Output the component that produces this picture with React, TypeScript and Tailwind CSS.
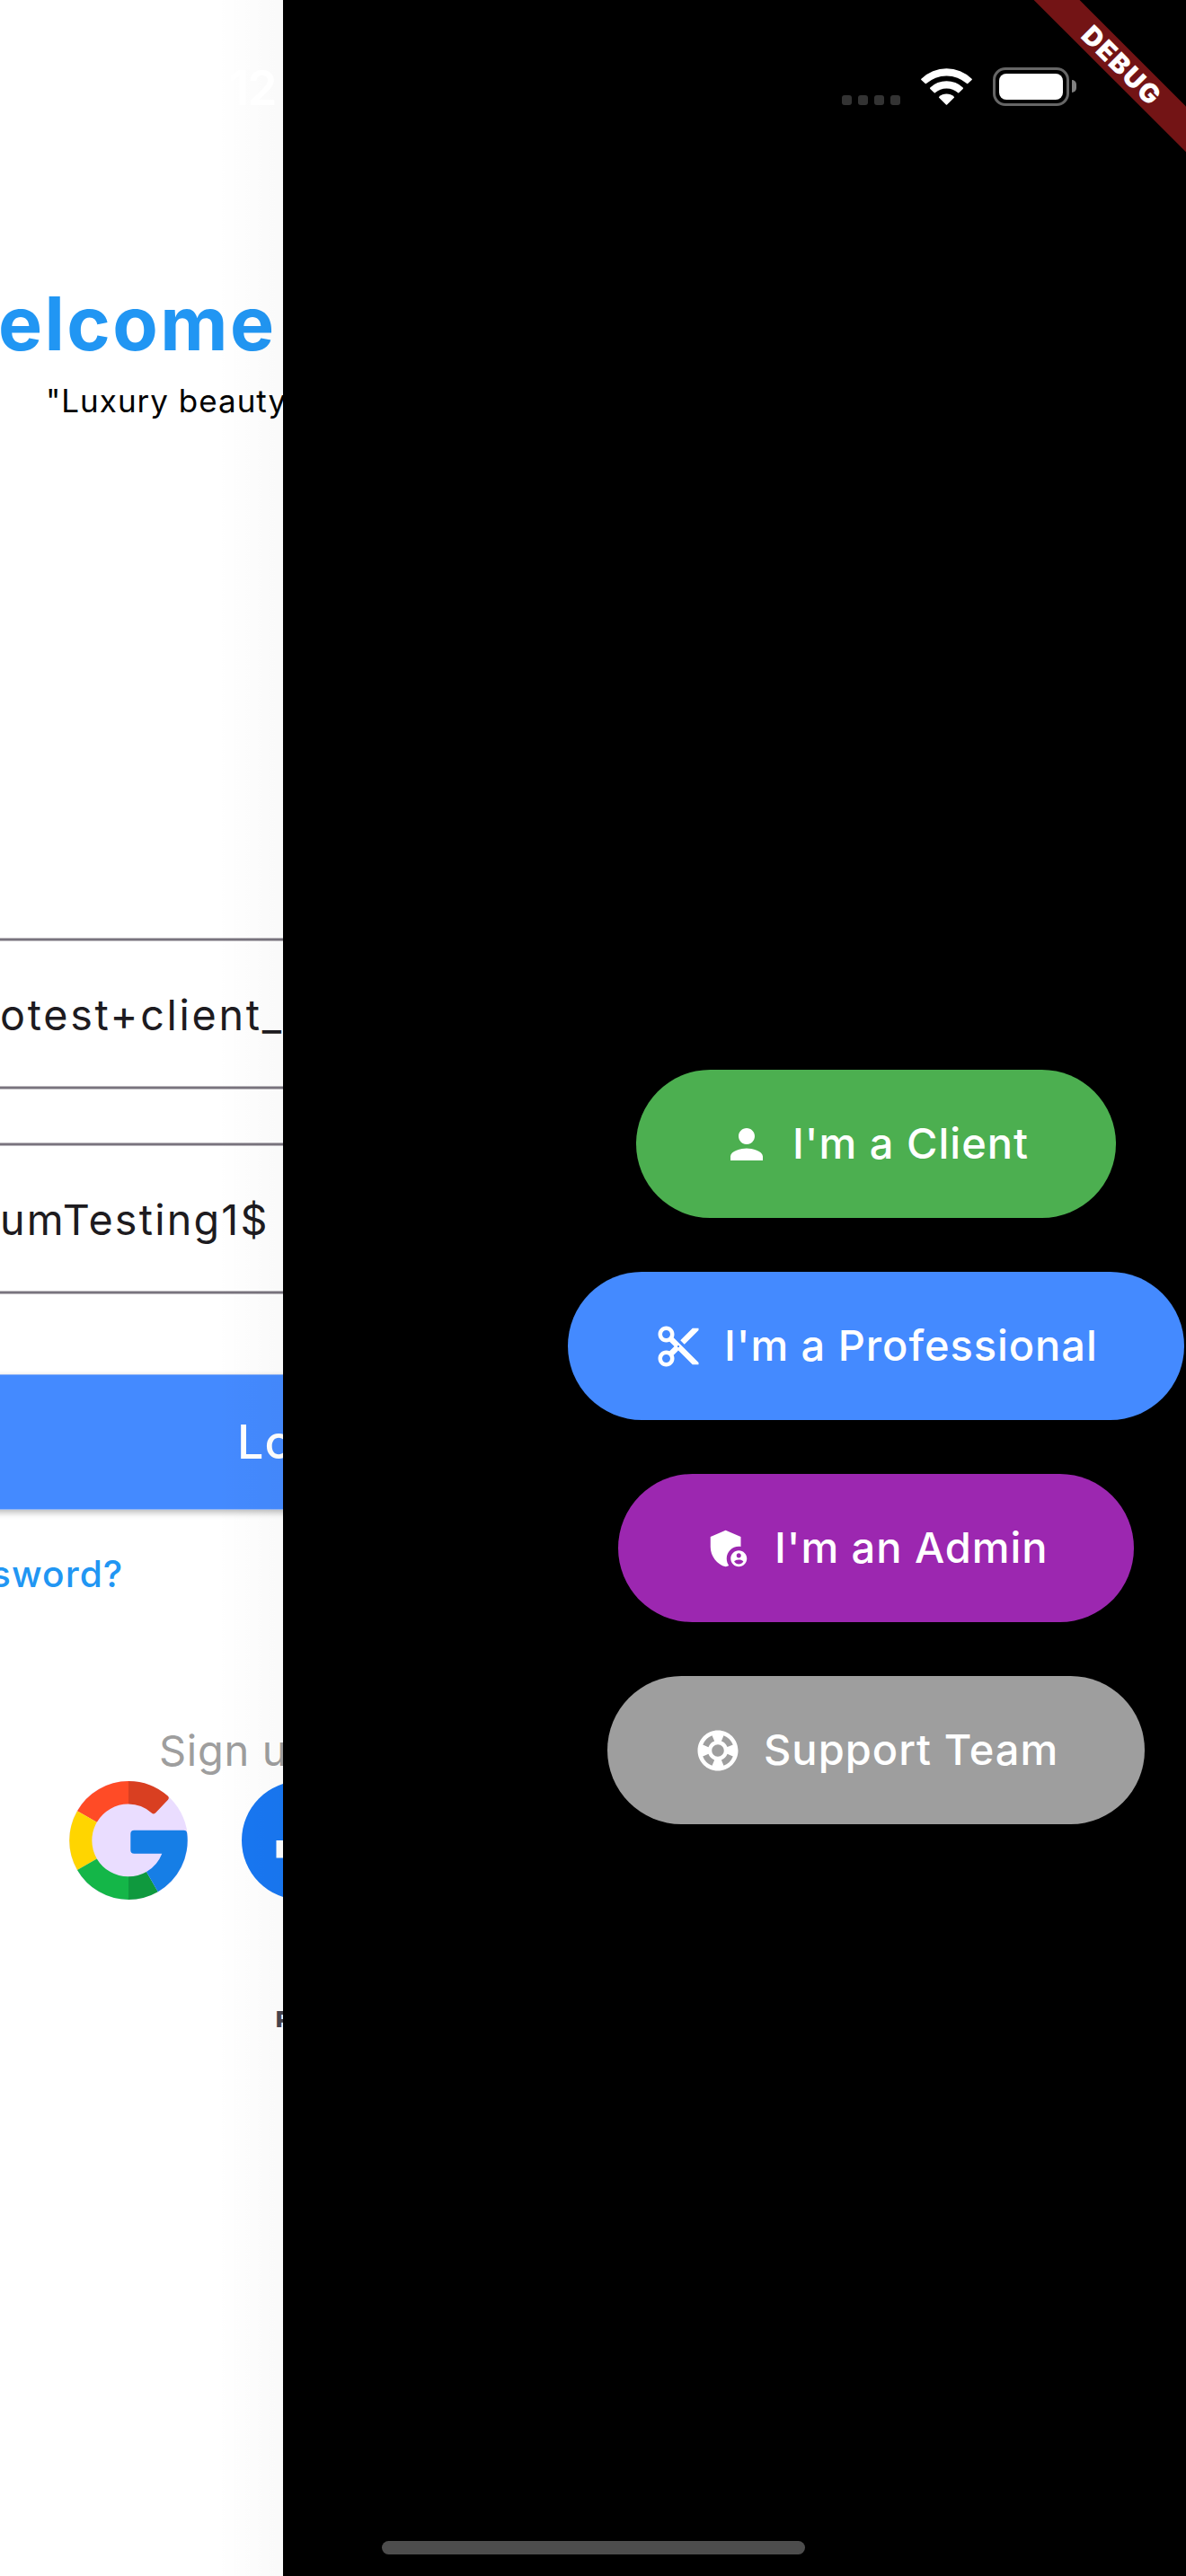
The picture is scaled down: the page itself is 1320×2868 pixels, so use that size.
import type { IconType } from "react-icons";
import {
  MdAdminPanelSettings,
  MdContentCut,
  MdPerson,
  MdSupport,
} from "react-icons/md";

type Role = { label: string; icon: IconType; className: string };

const roles: Role[] = [
  { label: "I'm a Client", icon: MdPerson, className: "w-[534px] bg-[#4caf50] tracking-[1px]" },
  { label: "I'm a Professional", icon: MdContentCut, className: "w-[686px] bg-[#448aff] tracking-[0.95px]" },
  { label: "I'm an Admin", icon: MdAdminPanelSettings, className: "w-[574px] bg-[#9c27b0] tracking-[0.95px]" },
  { label: "Support Team", icon: MdSupport, className: "w-[598px] bg-[#9e9e9e] tracking-[1px]" },
];

function RoleButton({ label, icon: Icon, className }: Role) {
  return (
    <button
      className={`flex h-[165px] shrink-0 items-center gap-6 rounded-full pl-24 text-[47px] leading-[60px] font-medium whitespace-nowrap text-white ${className}`}
    >
      <Icon className="size-[54px] shrink-0" />
      <span className="-mt-0.5">{label}</span>
    </button>
  );
}

function Field({ value, className }: { value: string; className: string }) {
  return (
    <div
      className={`h-[167px] w-full border-y-2 border-[#79747e] pt-[53px] text-[46.7px] leading-[60px] whitespace-nowrap text-[#1d1b20] shadow-[0_0_0_1px_#bcb9be,inset_0_1px_0_0_#bcb9be,inset_0_-1px_0_0_#bcb9be] ${className}`}
    >
      {value}
    </div>
  );
}

function GoogleLogo() {
  return (
    <svg viewBox="0 0 132 132" className="size-[132px] shrink-0">
      <circle cx="66" cy="66" r="66" fill="#eaddff" />
      <path d="M66 0A66 66 0 0 0 9 33.2L30.8 45.8A40.5 40.5 0 0 1 66 25.6Z" fill="#ff4b26" />
      <path d="M66 0A66 66 0 0 1 109.7 16.6Q111.8 18.6 110 20.8L96 35.6Q94 37.3 91.8 35.4A40.5 40.5 0 0 0 66 25.6Z" fill="#d93f21" />
      <path d="M9 33.2A66 66 0 0 0 9 99L30.8 86.4A40.5 40.5 0 0 1 30.8 45.8Z" fill="#ffd500" />
      <path d="M9 99A66 66 0 0 0 66 132V106.3A40.5 40.5 0 0 1 30.8 86.4Z" fill="#14b648" />
      <path d="M66 132A66 66 0 0 0 98.8 123.2L86 101A40.5 40.5 0 0 1 66 106.3Z" fill="#0f993e" />
      <path d="M72.3 54.7H127.5Q130.8 54.7 131.2 58A66 66 0 0 1 98.8 123.2L86 101A40.5 40.5 0 0 0 103.3 80.7H72.3Q68.3 80.7 68.3 76.7V58.7Q68.3 54.7 72.3 54.7Z" fill="#167ee6" />
    </svg>
  );
}

function FacebookLogo() {
  return (
    <svg viewBox="0 0 132 132" className="size-[132px] shrink-0">
      <circle cx="66" cy="66" r="66" fill="#1877f2" />
      <path d="M56 132V85.5H38.5V66H56V51.5C56 35 66 26 81 26C88 26 95 27.2 95 27.2V43.5H86.5C78 43.5 76 48.5 76 54V66H94.5L91.5 85.5H76V132Z" fill="#fff" />
    </svg>
  );
}

function StatusIcons() {
  return (
    <div className="mt-[75px] mr-[122px] flex h-[43px] self-end">
      <div className="mt-[31px] flex h-[11px] gap-[7px]">
        <span className="size-[11px] rounded-[3px] bg-[#333]" />
        <span className="size-[11px] rounded-[3px] bg-[#333]" />
        <span className="size-[11px] rounded-[3px] bg-[#333]" />
        <span className="size-[11px] rounded-[3px] bg-[#333]" />
      </div>
      <svg viewBox="0 0 57.2 42" className="ml-[23px] h-[42px] w-[57px]" fill="#fff">
        <path d="M0.4 13.9Q-0.3 13.3 0.4 12.6A40.4 40.4 0 0 1 56.8 12.6Q57.5 13.3 56.8 13.9L52.4 18.1Q51.9 18.6 51.3 18.1A33.8 33.8 0 0 0 5.9 18.1Q5.3 18.6 4.8 18.1Z" />
        <path d="M10.3 23.9Q9.7 23.3 10.3 22.6A26.2 26.2 0 0 1 46.9 22.6Q47.5 23.3 46.9 23.9L42.4 28.4Q41.9 28.9 41.3 28.4A19 19 0 0 0 15.9 28.4Q15.3 28.9 14.8 28.4Z" />
        <path d="M20.2 33.9Q19.7 33.3 20.2 32.8A12.4 12.4 0 0 1 37 32.8Q37.5 33.3 37 33.9L29.2 41.5Q28.6 42 28 41.5Z" />
      </svg>
      <div className="ml-[23px] h-[43px] w-[85px] rounded-[14px] border-[3px] border-[#666] p-1">
        <div className="h-[29px] w-[71px] rounded-[8px] bg-white" />
      </div>
      <div className="mt-[14px] ml-[3px] h-[14px] w-[5px] rounded-r-full bg-[#808080]" />
    </div>
  );
}

function LoginPage() {
  return (
    <section className="relative flex h-full w-[315px] shrink-0 flex-col overflow-hidden bg-white whitespace-nowrap">
      <div className="relative z-10 mt-[68px] ml-[255px] h-[60px] text-[53px] leading-[60px] font-semibold tracking-[-2px] text-white">12</div>
      <h1 className="mt-[182px] ml-[-2px] h-[100px] text-[82.5px] leading-[100px] font-bold tracking-[2.4px] text-[#2196f3]">elcome</h1>
      <p className="mt-4 ml-[51px] h-10 text-[35px] leading-[40px] tracking-[1px] text-black">"Luxury beauty</p>
      <Field value="otest+client_" className="mt-[579px] tracking-[2.7px]" />
      <Field value="umTesting1$" className="mt-[61px] tracking-[2.2px]" />
      <button className="mt-[90px] -ml-5 h-[151px] w-[355px] shrink-0 border-y border-[#8fb4f7] bg-[#448aff] pl-[284px] text-left text-[52px] leading-[60px] font-medium tracking-[1px] text-white shadow-[0_3px_7px_0_rgba(0,0,0,0.28)]">
        Lo
      </button>
      <a className="mt-[47px] ml-[-10px] h-[50px] text-[40.6px] leading-[50px] font-medium tracking-[1.1px] text-[#2196f3]">sword?</a>
      <p className="mt-[141px] ml-[177px] h-[60px] text-[47px] leading-[60px] tracking-[0.7px] text-[#9e9e9e]">Sign u</p>
      <div className="mt-1 ml-[77px] flex h-[132px] gap-[60px]">
        <GoogleLogo />
        <FacebookLogo />
      </div>
      <p className="mt-[118px] ml-[307px] h-[30px] text-[25px] leading-[30px] font-black text-[#49454f]">P</p>
      <div className="absolute inset-y-0 right-0 w-[75px] bg-linear-to-r from-transparent to-black/[0.022]" />
    </section>
  );
}

function RoleDrawer() {
  return (
    <aside className="flex h-full w-[1005px] flex-col bg-black">
      <StatusIcons />
      <nav className="mt-[1073px] ml-[315px] flex flex-col items-center gap-[60px]">
        {roles.map((role) => (
          <RoleButton key={role.label} {...role} />
        ))}
      </nav>
      <div className="mt-auto mb-6 ml-[110px] h-[15px] w-[471px] rounded-full bg-[#4d4d4d]" />
    </aside>
  );
}

function DebugBanner() {
  return (
    <div className="absolute top-0 right-0 size-[180px] overflow-hidden">
      <div className="absolute top-[53.8px] left-[-92px] h-[36.4px] w-[400px] rotate-45 bg-[#731415] pl-[2px] text-center text-[29.5px] leading-[36.4px] font-black tracking-[1.7px] text-white">
        DEBUG
      </div>
    </div>
  );
}

export default function App() {
  return (
    <main className="relative flex h-[2868px] w-[1320px] overflow-hidden bg-white font-['Inter',sans-serif]">
      <LoginPage />
      <RoleDrawer />
      <DebugBanner />
    </main>
  );
}
